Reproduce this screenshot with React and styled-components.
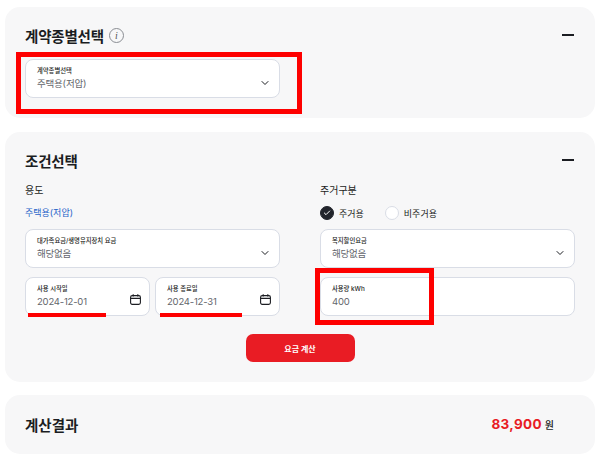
import React from 'react';
import styled, { createGlobalStyle } from 'styled-components';
import { ChevronDown, Check } from 'lucide-react';

const GlobalStyle = createGlobalStyle`
  html, body {
    margin: 0;
    background: #fff;
  }
  body {
    font-family: Inter, 'Noto Sans CJK KR', sans-serif;
    color: #1b1d22;
  }
`;

function CalendarIcon() {
  return (
    <CalendarSvg width="11" height="11" viewBox="0 0 11 11" fill="none" stroke="#1b1d22" strokeWidth="1.1">
      <rect x="0.6" y="1.6" width="9.8" height="8.8" rx="1.6" />
      <path d="M0.6 4.4H10.4M3.2 0.2V2.4M7.8 0.2V2.4" />
    </CalendarSvg>
  );
}

function Field({ label, value, children }) {
  return (
    <FieldBox>
      <FieldText>
        <FieldLabel>{label}</FieldLabel>
        <FieldValue>{value}</FieldValue>
      </FieldText>
      {children}
    </FieldBox>
  );
}

function App() {
  return (
    <Page>
      <GlobalStyle />
      <Card $height={111}>
        <CardHead>
          <Title>
            계약종별선택
            <InfoMark>i</InfoMark>
          </Title>
          <Minus />
        </CardHead>
        <HalfRow>
          <Field label="계약종별선택" value="주택용(저압)">
            <Chevron />
          </Field>
        </HalfRow>
      </Card>

      <Card $height={250}>
        <CardHead>
          <Title>조건선택</Title>
          <Minus />
        </CardHead>
        <Columns>
          <Column>
            <SectionLabel>용도</SectionLabel>
            <Usage>주택용(저압)</Usage>
            <Field label="대가족요금/생명유지장치 요금" value="해당없음">
              <Chevron />
            </Field>
            <DateRow>
              <Field label="사용 시작일" value="2024-12-01">
                <CalendarIcon />
              </Field>
              <Field label="사용 종료일" value="2024-12-31">
                <CalendarIcon />
              </Field>
            </DateRow>
          </Column>
          <Column>
            <SectionLabel>주거구분</SectionLabel>
            <RadioRow>
              <RadioItem>
                <Radio $on>
                  <Check size={8} strokeWidth={3} color="#fff" />
                </Radio>
                주거용
              </RadioItem>
              <RadioItem>
                <Radio />
                비주거용
              </RadioItem>
            </RadioRow>
            <Field label="복지할인요금" value="해당없음">
              <Chevron />
            </Field>
            <LastField>
              <Field label="사용량 kWh" value="400" />
            </LastField>
          </Column>
        </Columns>
        <ButtonRow>
          <SubmitButton>요금 계산</SubmitButton>
        </ButtonRow>
      </Card>

      <ResultCard>
        <ResultTitle>계산결과</ResultTitle>
        <Amount>
          <AmountNumber>83,900</AmountNumber>
          <AmountUnit>원</AmountUnit>
        </Amount>
      </ResultCard>

      <RedBox $left={16} $top={52} $width={286} $height={62} />
      <RedBox $left={315} $top={268} $width={119} $height={57} />
      <RedLine $left={28} $top={313} $width={78} />
      <RedLine $left={160} $top={313} $width={82} />
    </Page>
  );
}

const Page = styled.main`
  position: relative;
  width: 600px;
  height: 458px;
  box-sizing: border-box;
  padding: 7px 5px 0;
  display: flex;
  flex-direction: column;
  gap: 14px;
  overflow: hidden;
`;

const Card = styled.section`
  height: ${(p) => p.$height}px;
  box-sizing: border-box;
  padding: 18px 20px 0;
  background: #f7f7f8;
  border-radius: 15px;
`;

const CardHead = styled.div`
  display: flex;
  align-items: center;
  justify-content: space-between;
  height: 20px;
  margin-bottom: 12px;
`;

const Title = styled.h2`
  display: flex;
  align-items: center;
  gap: 5px;
  margin: 0;
  font-size: 14.5px;
  font-weight: 700;
  letter-spacing: -0.2px;
`;

const InfoMark = styled.span`
  width: 13px;
  height: 13px;
  border: 1px solid #8a8d93;
  border-radius: 50%;
  display: flex;
  align-items: center;
  justify-content: center;
  font: italic 10px 'Liberation Serif', serif;
  color: #555;
`;

const Minus = styled.span`
  width: 12px;
  height: 1.5px;
  margin-right: 1px;
  background: #1b1d22;
`;

const HalfRow = styled.div`
  width: 255px;
  margin-top: 14px;
`;

const Columns = styled.div`
  display: grid;
  grid-template-columns: 255px 255px;
  column-gap: 40px;
`;

const Column = styled.div`
  display: flex;
  flex-direction: column;
  gap: 6px;
`;

const SectionLabel = styled.div`
  height: 15px;
  line-height: 17px;
  font-size: 10px;
`;

const Usage = styled.div`
  height: 20px;
  line-height: 20px;
  font-size: 9px;
  color: #1f63c8;
`;

const FieldBox = styled.div`
  flex: 0 0 39px;
  height: 39px;
  box-sizing: border-box;
  padding: 0 7px 2px 11px;
  display: flex;
  align-items: center;
  justify-content: space-between;
  background: #fff;
  border: 1px solid #d9dde6;
  border-radius: 8px;
`;

const LastField = styled.div`
  margin-top: 3px;
`;

const FieldText = styled.div`
  display: flex;
  flex-direction: column;
`;

const FieldLabel = styled.span`
  height: 11px;
  line-height: 13px;
  font-size: 6.3px;
  font-weight: 500;
`;

const FieldValue = styled.span`
  height: 15px;
  line-height: 15px;
  font-size: 9.5px;
  letter-spacing: -0.2px;
  color: #63666c;
`;

const Chevron = styled(ChevronDown).attrs({ size: 12, strokeWidth: 2 })`
  color: #1b1d22;
  margin: 10px 1px 0 0;
`;

const CalendarSvg = styled.svg`
  margin: 8px 1px 0 0;
`;

const DateRow = styled.div`
  display: grid;
  grid-template-columns: 125px 125px;
  column-gap: 5px;
  margin-top: 3px;
`;

const RadioRow = styled.div`
  height: 20px;
  display: flex;
  align-items: center;
  gap: 21px;
`;

const RadioItem = styled.div`
  display: flex;
  align-items: center;
  gap: 5px;
  font-size: 9px;
`;

const Radio = styled.span`
  width: 14px;
  height: 14px;
  box-sizing: border-box;
  border-radius: 50%;
  display: flex;
  align-items: center;
  justify-content: center;
  background: ${(p) => (p.$on ? '#22252c' : '#fff')};
  border: 1px solid ${(p) => (p.$on ? '#22252c' : '#d9dde6')};
`;

const ButtonRow = styled.div`
  display: flex;
  justify-content: center;
  margin-top: 18px;
`;

const SubmitButton = styled.button`
  width: 109px;
  height: 28px;
  padding: 0;
  border: 0;
  border-radius: 7px;
  background: #e91c24;
  color: #fff;
  font-family: inherit;
  font-size: 8px;
  font-weight: 700;
`;

const ResultCard = styled.section`
  height: 59px;
  margin-top: -1px;
  box-sizing: border-box;
  padding: 0 20px 1px;
  display: flex;
  align-items: center;
  justify-content: space-between;
  background: #f7f7f8;
  border-radius: 15px;
`;

const ResultTitle = styled.h2`
  margin: 0;
  font-size: 14.5px;
  font-weight: 700;
`;

const Amount = styled.div`
  display: flex;
  align-items: center;
  gap: 3px;
  margin-right: 21px;
`;

const AmountNumber = styled.span`
  font-size: 13.5px;
  font-weight: 700;
  color: #e81c24;
  letter-spacing: 0.3px;
`;

const AmountUnit = styled.span`
  font-size: 10px;
  font-weight: 500;
`;

const RedBox = styled.div`
  position: absolute;
  left: ${(p) => p.$left}px;
  top: ${(p) => p.$top}px;
  width: ${(p) => p.$width}px;
  height: ${(p) => p.$height}px;
  box-sizing: border-box;
  border: 5px solid #fe0000;
`;

const RedLine = styled.div`
  position: absolute;
  left: ${(p) => p.$left}px;
  top: ${(p) => p.$top}px;
  width: ${(p) => p.$width}px;
  height: 4px;
  background: #fe0000;
`;

export default App;
